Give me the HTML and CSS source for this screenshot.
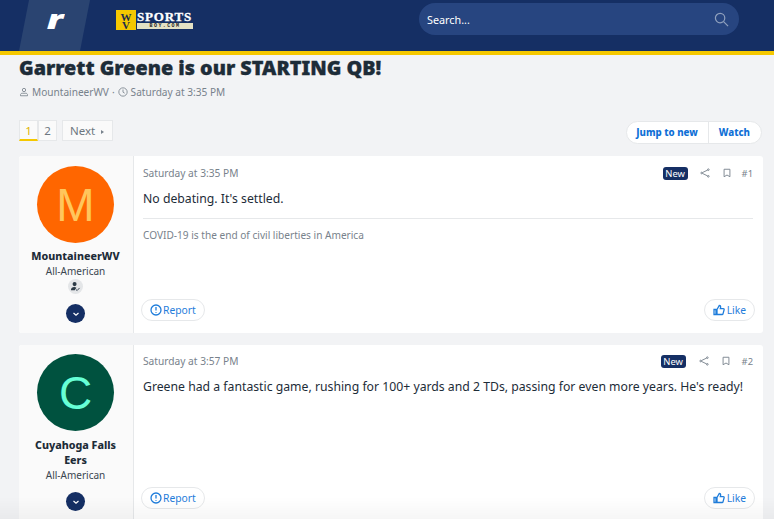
FILE: index.html
```html
<!DOCTYPE html>
<html lang="en">
<head>
    <meta charset="UTF-8">
    <meta name="viewport" content="width=device-width, initial-scale=1.0">
    <title>Garrett Greene is our STARTING QB!</title>
    <link rel="stylesheet" href="styles.css">
</head>
<body>
    <header class="site-header">
        <div class="brand-tab"><span class="brand-r">r</span></div>
        <div class="logo">
            <div class="logo-badge">W V</div>
            <div class="logo-words">
                <span class="logo-sports">SPORTS</span>
                <span class="logo-com">BOY.COM</span>
            </div>
        </div>
        <div class="search">
            <span>Search...</span>
            <svg class="search-icon" viewBox="0 0 16 16"><circle cx="6.5" cy="6.5" r="5"/><path d="M10.2 10.2 15 15"/></svg>
        </div>
    </header>

    <main class="page">
        <h1>Garrett Greene is our STARTING QB!</h1>
        <div class="thread-meta">
            <svg class="meta-icon" viewBox="0 0 12 12"><circle cx="6" cy="3.6" r="2"/><path d="M1.8 10.5V9.2c0-1 1-1.7 2-1.7h4.4c1 0 2 .7 2 1.7v1.3z"/></svg>
            <span>MountaineerWV</span>
            <span>·</span>
            <svg class="meta-icon" viewBox="0 0 12 12"><circle cx="6" cy="6" r="5"/><path d="M6 3v3.2l2 1.2"/></svg>
            <span>Saturday at 3:35 PM</span>
        </div>

        <div class="toolbar">
            <nav class="pager">
                <a class="page-num current">1</a>
                <a class="page-num">2</a>
                <a class="page-next">Next <span class="next-arrow"></span></a>
            </nav>
            <div class="thread-actions">
                <a>Jump to new</a>
                <a>Watch</a>
            </div>
        </div>

        <article class="post post-first">
            <aside class="user-cell">
                <div class="avatar avatar-m">M</div>
                <div class="username">MountaineerWV</div>
                <div class="user-title">All-American</div>
                <div class="user-badge">
                    <svg viewBox="0 0 12 12"><circle cx="5" cy="3.4" r="2.2"/><path d="M1 10c0-2.2 1.6-3.4 3.6-3.4 1 0 1.8.3 2.4.8L5.2 10z"/><path class="check" d="M6.6 9.4l1.2 1 2.6-2.8"/></svg>
                </div>
                <div class="expand"><svg viewBox="0 0 8 8"><path d="M1.5 3 4 5.3 6.5 3"/></svg></div>
            </aside>
            <section class="post-main">
                <div class="post-head">
                    <time>Saturday at 3:35 PM</time>
                    <div class="post-tools">
                        <span class="new-tag">New</span>
                        <svg class="tool-icon share" viewBox="0 0 12 12"><circle cx="10" cy="2" r="1"/><circle cx="2" cy="6" r="1"/><circle cx="10" cy="10" r="1"/><path d="M9.1 2.5 2.9 5.5M2.9 6.5l6.2 3"/></svg>
                        <svg class="tool-icon mark" viewBox="0 0 12 12"><path d="M2.5 1.5h7v9L6 8.4l-3.5 2.1z"/></svg>
                        <span class="post-num">#1</span>
                    </div>
                </div>
                <p class="post-text">No debating. It's settled.</p>
                <div class="signature">COVID-19 is the end of civil liberties in America</div>
                <div class="post-foot">
                    <a class="pill">
                        <svg class="pill-icon" viewBox="0 0 12 12"><circle cx="6" cy="6" r="5"/><path d="M6 3v3.6M6 8.2v.8"/></svg>
                        Report
                    </a>
                    <a class="pill like">
                        <svg class="pill-icon" viewBox="0 0 12 12"><path d="M1 5.5h2v5H1zM4 5.5l2.3-4c.9 0 1.4.6 1.4 1.4L7.3 4.6h3c.6 0 1 .6.8 1.2l-1.1 4c-.1.4-.5.7-.9.7H4z"/></svg>
                        Like
                    </a>
                </div>
            </section>
        </article>

        <article class="post post-second">
            <aside class="user-cell">
                <div class="avatar avatar-c">C</div>
                <div class="username">Cuyahoga Falls Eers</div>
                <div class="user-title">All-American</div>
                <div class="expand"><svg viewBox="0 0 8 8"><path d="M1.5 3 4 5.3 6.5 3"/></svg></div>
            </aside>
            <section class="post-main">
                <div class="post-head">
                    <time>Saturday at 3:57 PM</time>
                    <div class="post-tools">
                        <span class="new-tag">New</span>
                        <svg class="tool-icon share" viewBox="0 0 12 12"><circle cx="10" cy="2" r="1"/><circle cx="2" cy="6" r="1"/><circle cx="10" cy="10" r="1"/><path d="M9.1 2.5 2.9 5.5M2.9 6.5l6.2 3"/></svg>
                        <svg class="tool-icon mark" viewBox="0 0 12 12"><path d="M2.5 1.5h7v9L6 8.4l-3.5 2.1z"/></svg>
                        <span class="post-num">#2</span>
                    </div>
                </div>
                <p class="post-text">Greene had a fantastic game, rushing for 100+ yards and 2 TDs, passing for even more years. He's ready!</p>
                <div class="post-foot">
                    <a class="pill">
                        <svg class="pill-icon" viewBox="0 0 12 12"><circle cx="6" cy="6" r="5"/><path d="M6 3v3.6M6 8.2v.8"/></svg>
                        Report
                    </a>
                    <a class="pill like">
                        <svg class="pill-icon" viewBox="0 0 12 12"><path d="M1 5.5h2v5H1zM4 5.5l2.3-4c.9 0 1.4.6 1.4 1.4L7.3 4.6h3c.6 0 1 .6.8 1.2l-1.1 4c-.1.4-.5.7-.9.7H4z"/></svg>
                        Like
                    </a>
                </div>
            </section>
        </article>
    </main>
    <div class="bottom-fade"></div>
</body>
</html>
```

FILE: styles.css
```css
* {
    box-sizing: border-box;
}
html, body {
    height: 519px;
    overflow: hidden;
}
body {
    margin: 0;
    background: #f2f3f5;
    color: #1d2c38;
    font-family: "Noto Sans", "Open Sans", sans-serif;
}
a {
    color: inherit;
    text-decoration: none;
}

.site-header {
    display: flex;
    align-items: flex-start;
    height: 55px;
    padding-left: 19px;
    background: #152f64;
    border-bottom: 4px solid #f5c800;
}
.brand-tab {
    display: flex;
    align-items: center;
    justify-content: center;
    width: 71px;
    height: 51px;
    background: #2a4471;
    clip-path: polygon(10px 0, 100% 0, 61px 100%, 0 100%);
}
.brand-r {
    margin-top: -14px;
    color: #fff;
    font-size: 27px;
    font-style: italic;
    font-weight: 900;
    line-height: 1;
    transform: scaleX(1.4);
}
.logo {
    display: flex;
    align-items: flex-start;
    gap: 1px;
    width: 77px;
    margin: 10px 0 0 26px;
}
.logo-badge {
    flex: none;
    width: 20px;
    height: 20px;
    padding-top: 1px;
    border: 2px solid #f5c800;
    background: #f5c800;
    color: #1c2b4a;
    font: 700 11px/8px "Liberation Serif", serif;
    text-align: center;
}
.logo-words {
    display: flex;
    flex-direction: column;
    width: 56px;
    padding-top: 1px;
}
.logo-sports {
    color: #fff;
    font: 700 13px/11px "Liberation Serif", serif;
    letter-spacing: 0.8px;
    -webkit-text-stroke: 0.3px #fff;
}
.logo-com {
    height: 6px;
    margin-top: 1px;
    background: #e3e1c4;
    color: #1c1c1c;
    font: 700 5px/6px "Liberation Mono", monospace;
    letter-spacing: 1.4px;
    text-align: center;
}
.search {
    display: flex;
    align-items: center;
    justify-content: space-between;
    width: 320px;
    height: 32px;
    margin: 3px 0 0 226px;
    padding: 0 10px 0 8px;
    border-radius: 16px;
    background: #274580;
    color: #fff;
    font-size: 10.8px;
}
.search-icon {
    width: 15px;
    height: 15px;
    fill: none;
    stroke: #8fa0bd;
    stroke-width: 1.3;
}

.page {
    padding: 0 11px 0 19px;
}
h1 {
    margin: 0;
    font-size: 19.8px;
    font-weight: 900;
    line-height: 26px;
    -webkit-text-stroke: 0.35px #1d2c38;
}
.thread-meta {
    display: flex;
    align-items: center;
    gap: 3px;
    margin-top: 4px;
    color: #78828c;
    font-size: 10.1px;
    line-height: 14px;
}
.meta-icon {
    width: 10px;
    height: 10px;
    fill: none;
    stroke: #78828c;
    stroke-width: 1;
}

.toolbar {
    display: flex;
    justify-content: space-between;
    align-items: flex-start;
    height: 25px;
    margin-top: 21px;
}
.pager {
    display: flex;
    align-items: center;
    color: #6d7780;
    font-size: 11.5px;
}
.page-num, .page-next {
    height: 21px;
    line-height: 19px;
    background: #fafafa;
    border: 1px solid #e6e8ea;
}
.page-num {
    width: 19px;
    text-align: center;
}
.page-num.current {
    color: #e0b400;
    border-bottom: 2px solid #f5c800;
}
.page-next {
    margin-left: 5px;
    padding: 0 8px 0 7px;
}
.next-arrow {
    display: inline-block;
    margin-left: 3px;
    vertical-align: 1px;
    border-left: 3px solid #78828c;
    border-top: 2px solid transparent;
    border-bottom: 2px solid transparent;
}
.thread-actions {
    display: flex;
    height: 23px;
    margin: 1px 1px 0 0;
    background: #fff;
    border: 1px solid #e6e8ea;
    border-radius: 12px;
    color: #0f6fd6;
    font-size: 9.7px;
    font-weight: 800;
    line-height: 21px;
}
.thread-actions a {
    padding: 0 10px 0 9px;
}
.thread-actions a + a {
    padding: 0 11px 0 10px;
    border-left: 1px solid #e6e8ea;
}

.post {
    display: flex;
    height: 177px;
    margin-top: 12px;
    border-radius: 3px;
    background: #fff;
    overflow: hidden;
}
.post-first {
    margin-top: 11px;
}
.user-cell {
    display: flex;
    flex-direction: column;
    align-items: center;
    flex: none;
    width: 115px;
    padding: 10px 5px 0 4px;
    background: #fafafa;
    border-right: 1px solid #e6e8ea;
    text-align: center;
}
.post-second .user-cell {
    padding-top: 9px;
}
.avatar {
    display: flex;
    align-items: center;
    justify-content: center;
    flex: none;
    width: 77px;
    height: 77px;
    border-radius: 50%;
    font-family: "Liberation Sans", sans-serif;
    font-size: 46px;
}
.avatar-m {
    background: #ff6600;
    color: #ffc65c;
}
.avatar-c {
    background: #00523f;
    color: #66ffd6;
}
.username {
    margin-top: 6px;
    font-size: 10.7px;
    font-weight: 800;
    line-height: 15px;
}
.post-second .username {
    margin-top: 7px;
    padding: 0 2px;
}
.user-title {
    color: #3a4650;
    font-size: 10px;
    line-height: 15px;
}
.user-badge {
    display: flex;
    align-items: center;
    justify-content: center;
    width: 15px;
    height: 15px;
    border-radius: 50%;
    background: #e4e6e8;
}
.user-badge svg {
    width: 11px;
    height: 11px;
    fill: #2c3a46;
}
.user-badge .check {
    fill: none;
    stroke: #2c3a46;
    stroke-width: 1;
}
.expand {
    display: flex;
    align-items: center;
    justify-content: center;
    width: 19px;
    height: 19px;
    margin-top: 10px;
    border-radius: 50%;
    background: #152f64;
}
.post-second .expand {
    margin-top: 9px;
}
.expand svg {
    width: 8px;
    height: 8px;
    fill: none;
    stroke: #fff;
    stroke-width: 1.2;
}

.post-main {
    display: flex;
    flex-direction: column;
    flex: 1;
    min-width: 0;
    padding: 9px 10px 12px 9px;
}
.post-second .post-main {
    padding-top: 8px;
    padding-bottom: 13px;
}
.post-head {
    display: flex;
    justify-content: space-between;
    align-items: center;
    height: 16px;
    color: #78828c;
    font-size: 10.2px;
}
.post-tools {
    display: flex;
    align-items: center;
}
.new-tag {
    width: 25px;
    height: 13px;
    margin-right: 12px;
    border-radius: 3px;
    background: #152f64;
    color: #fff;
    font-size: 9.4px;
    line-height: 13px;
    text-align: center;
}
.post-second .new-tag {
    margin-right: 13px;
}
.tool-icon {
    width: 10px;
    height: 10px;
    fill: none;
    stroke: #78828c;
    stroke-width: 1.1;
}
.tool-icon.share {
    margin-right: 12px;
}
.tool-icon.mark {
    margin-right: 10px;
}
.post-second .tool-icon.mark {
    margin-right: 11px;
}
.post-num {
    font-size: 9.4px;
}
.post-text {
    margin: 9px 0 0;
    font-size: 12.24px;
    line-height: 18px;
}
.signature {
    margin-top: 10px;
    padding-top: 9px;
    border-top: 1px solid #e6e8ea;
    color: #78828c;
    font-size: 10.1px;
    line-height: 15px;
}
.post-foot {
    display: flex;
    justify-content: space-between;
    align-items: center;
    margin: auto -2px 0 -2px;
}
.pill {
    display: flex;
    align-items: center;
    gap: 1px;
    height: 22px;
    padding: 0 8px;
    background: #fff;
    border: 1px solid #e6e8ea;
    border-radius: 11px;
    color: #1f7ddb;
    font-size: 10.3px;
}
.pill.like {
    gap: 2px;
}
.pill-icon {
    width: 12px;
    height: 12px;
    fill: none;
    stroke: #1f7ddb;
    stroke-width: 1.3;
}

.bottom-fade {
    position: fixed;
    left: 0;
    right: 0;
    bottom: 0;
    height: 22px;
    background: linear-gradient(rgba(0, 0, 0, 0), rgba(0, 0, 0, 0.035));
}
```
